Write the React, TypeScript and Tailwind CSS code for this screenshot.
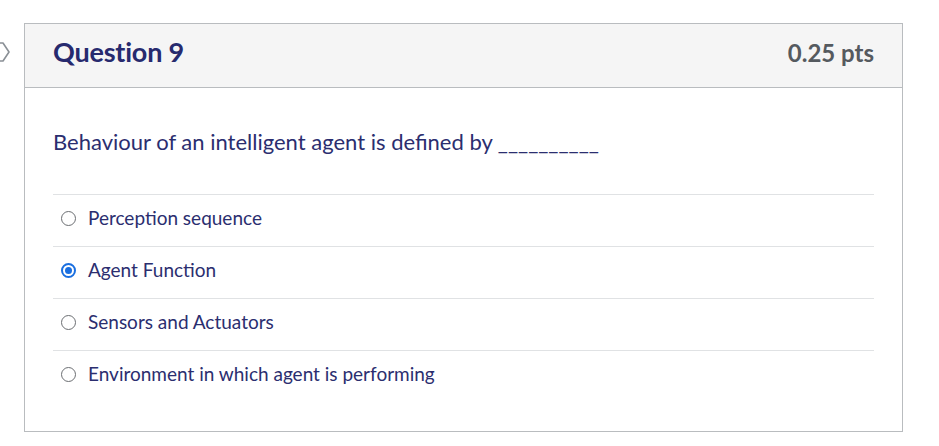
const answers = [
  { id: "a1", text: "Perception sequence", checked: false },
  { id: "a2", text: "Agent Function", checked: true },
  { id: "a3", text: "Sensors and Actuators", checked: false },
  { id: "a4", text: "Environment in which agent is performing", checked: false },
];

export default function App() {
  return (
    <div className="w-[939px] h-[446px] bg-white overflow-hidden flex pt-[23px] font-['Lato','Noto_Sans',sans-serif]">
      <div className="w-[24px] shrink-0 relative">
        {/* flag marker, partially cut off by the page edge */}
        <svg className="absolute left-[-12px] top-[17px]" width="24" height="24" viewBox="0 0 24 24">
          <path d="M1 3 H15 L21 12 L15 21 H1 Z" fill="none" stroke="#8a9096" strokeWidth="1.6" strokeLinejoin="round" />
        </svg>
      </div>
      <div className="w-[879px] h-[409px] border border-[#b9bcbf] flex flex-col">
        <div className="h-[64px] bg-[#f5f5f5] border-b border-[#b9bcbf] flex items-center justify-between px-[28px] pb-[6px]">
          <h2 className="text-[27px] font-bold text-[#272a6e] tracking-[-0.2px]">Question 9</h2>
          <span className="text-[24px] font-bold text-[#555a5f]">0.25 pts</span>
        </div>
        <div className="px-[28px] pt-[38px]">
          <p className="text-[22px] leading-[32px] text-[#2b2e6f]">
            Behaviour of an intelligent agent is defined by __________
          </p>
          <div className="mt-[36px]">
            {answers.map((a) => (
              <div key={a.id} className="h-[52px] border-t border-[#e0e2e4] flex items-center pl-[8px] pb-[5px] gap-[12px]">
                {a.checked ? (
                  <span className="w-[15px] h-[15px] rounded-full border-[2px] border-[#1a6fe0] flex items-center justify-center">
                    <span className="w-[7px] h-[7px] rounded-full bg-[#1a6fe0]" />
                  </span>
                ) : (
                  <span className="w-[15px] h-[15px] rounded-full border border-[#6b6e72]" />
                )}
                <span className="text-[19px] text-[#2b2e6f]">{a.text}</span>
              </div>
            ))}
          </div>
        </div>
      </div>
    </div>
  );
}
